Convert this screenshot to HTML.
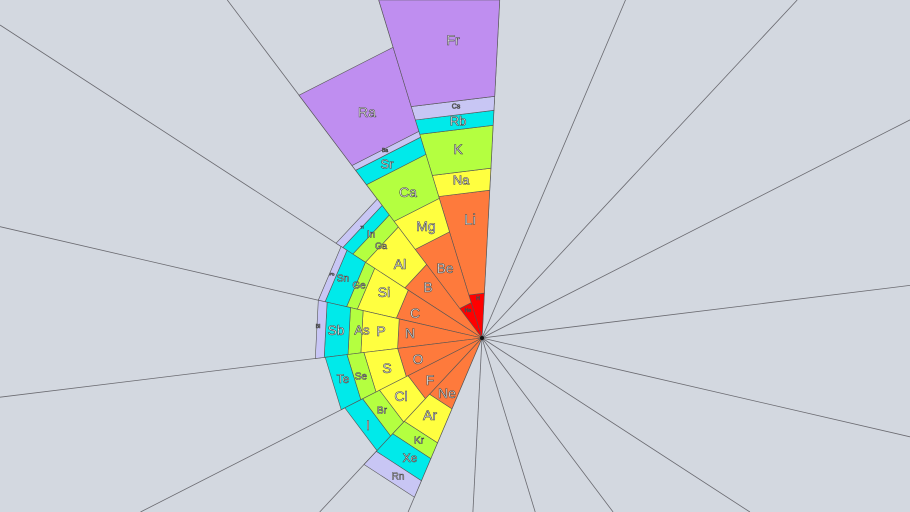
<!DOCTYPE html>
<html><head><meta charset="utf-8"><style>
html,body{margin:0;padding:0;background:#d3d8e0;width:910px;height:512px;overflow:hidden;}
svg{display:block}
text{font-family:"Liberation Sans","DejaVu Sans",sans-serif;fill:#fff;stroke:#4a4a4a;stroke-width:0.6;text-anchor:middle;dominant-baseline:central}
</style></head><body>
<svg id="s" width="910" height="512" viewBox="0 0 910 512" xmlns="http://www.w3.org/2000/svg">
<rect width="910" height="512" fill="#d3d8e0"/>
<g id="lines" stroke="#6a6a70" stroke-width="0.8"></g>
<g id="cells" stroke="#555" stroke-width="0.6"></g>
<circle cx="482" cy="338" r="2" fill="#111"/>
<g id="labels">
<text x="453" y="40" font-size="14">Fr</text>
<text x="367" y="112" font-size="14">Ra</text>
<text x="456" y="107" font-size="7">Cs</text>
<text x="458" y="121" font-size="13">Rb</text>
<text x="458" y="149" font-size="14">K</text>
<text x="461" y="180" font-size="13">Na</text>
<text x="470" y="220" font-size="15">Li</text>
<text x="478" y="299" font-size="5">H</text>
<text x="468" y="311" font-size="5">He</text>
<text x="445" y="268" font-size="14">Be</text>
<text x="426" y="226" font-size="14">Mg</text>
<text x="408" y="192" font-size="14">Ca</text>
<text x="387" y="164" font-size="13">Sr</text>
<text x="385" y="151" font-size="5">Ba</text>
<text x="428" y="287" font-size="14">B</text>
<text x="400" y="264" font-size="14">Al</text>
<text x="381" y="246" font-size="9">Ga</text>
<text x="371" y="235" font-size="10">In</text>
<text x="362" y="227" font-size="4">Tl</text>
<text x="415" y="313" font-size="14">C</text>
<text x="384" y="292" font-size="14">Si</text>
<text x="359" y="286" font-size="10">Ge</text>
<text x="343" y="279" font-size="10">Sn</text>
<text x="332" y="274" font-size="4">Pb</text>
<text x="410" y="333" font-size="14">N</text>
<text x="381" y="331" font-size="14">P</text>
<text x="362" y="330" font-size="13">As</text>
<text x="336" y="330" font-size="14">Sb</text>
<text x="318" y="327" font-size="5">Bi</text>
<text x="418" y="359" font-size="14">O</text>
<text x="387" y="368" font-size="14">S</text>
<text x="361" y="377" font-size="10">Se</text>
<text x="343" y="379" font-size="12">Te</text>
<text x="430" y="380" font-size="14">F</text>
<text x="401" y="396" font-size="14">Cl</text>
<text x="382" y="411" font-size="10">Br</text>
<text x="368" y="425" font-size="14">I</text>
<text x="447" y="393" font-size="14">Ne</text>
<text x="430" y="415" font-size="14">Ar</text>
<text x="419" y="441" font-size="10">Kr</text>
<text x="410" y="458" font-size="12">Xe</text>
<text x="398" y="477" font-size="10">Rn</text>
</g>
</svg>
<script>
(function(){
var cx=482,cy=338,NS="http://www.w3.org/2000/svg";
function P(a,r){var t=a*Math.PI/180;return [cx+r*Math.sin(t),cy-r*Math.cos(t)];}
var L=document.getElementById("lines");
for(var k=0;k<18;k++){var a=(3+20*k)*Math.PI/180,dx=Math.sin(a),dy=-Math.cos(a);
var t=1e9;
if(dx>1e-6)t=Math.min(t,(910-cx)/dx); if(dx<-1e-6)t=Math.min(t,-cx/dx);
if(dy>1e-6)t=Math.min(t,(512-cy)/dy); if(dy<-1e-6)t=Math.min(t,-cy/dy);
var l=document.createElementNS(NS,"line");
l.setAttribute("x1",cx);l.setAttribute("y1",cy);l.setAttribute("x2",(cx+t*dx).toFixed(1));l.setAttribute("y2",(cy+t*dy).toFixed(1));L.appendChild(l);}
var R="#ff0000",O="#fe7a3c",Y="#ffff40",G="#b4ff40",C="#00eaea",V="#c8c6f4",U="#bf8ef0";
var groups=[
[-17,3,[[0,45,R],[45,148,O],[148,170,Y],[170,213,G],[213,228,C],[228,242,V]]],
[-37,-17,[[0,37,R],[37,111,O],[111,146,Y],[146,192,G],[192,210,C],[210,216,V],[216,304,U]]],
[-57,-37,[[0,92,O],[92,139,Y],[139,154,G],[154,166,C],[166,174,V]]],
[-77,-57,[[0,88,O],[88,128,Y],[128,139,G],[139,161,C],[161,168,V]]],
[-97,-77,[[0,85,O],[85,122,Y],[122,135,G],[135,159,C],[159,168,V]]],
[-117,-97,[[0,85,O],[85,119,Y],[119,136,G],[136,158,C]]],
[-137,-117,[[0,83,O],[83,115,Y],[115,134,G],[134,154,C]]],
[-157,-137,[[0,77,O],[77,114,Y],[114,131,G],[131,155,C],[155,173,V]]]];
var Cg=document.getElementById("cells");
function poly(pts,fill){var e=document.createElementNS(NS,"polygon");
e.setAttribute("points",pts.map(function(q){return q[0].toFixed(1)+","+q[1].toFixed(1);}).join(" "));
e.setAttribute("fill",fill);Cg.appendChild(e);}
groups.forEach(function(g){g[2].forEach(function(c){
poly([P(g[0],c[0]),P(g[1],c[0]),P(g[1],c[1]),P(g[0],c[1])],c[2]);});});
poly([P(-17,242),P(3,242),[499.7,0],[378.7,0]],U);
})();
</script>
</body></html>
